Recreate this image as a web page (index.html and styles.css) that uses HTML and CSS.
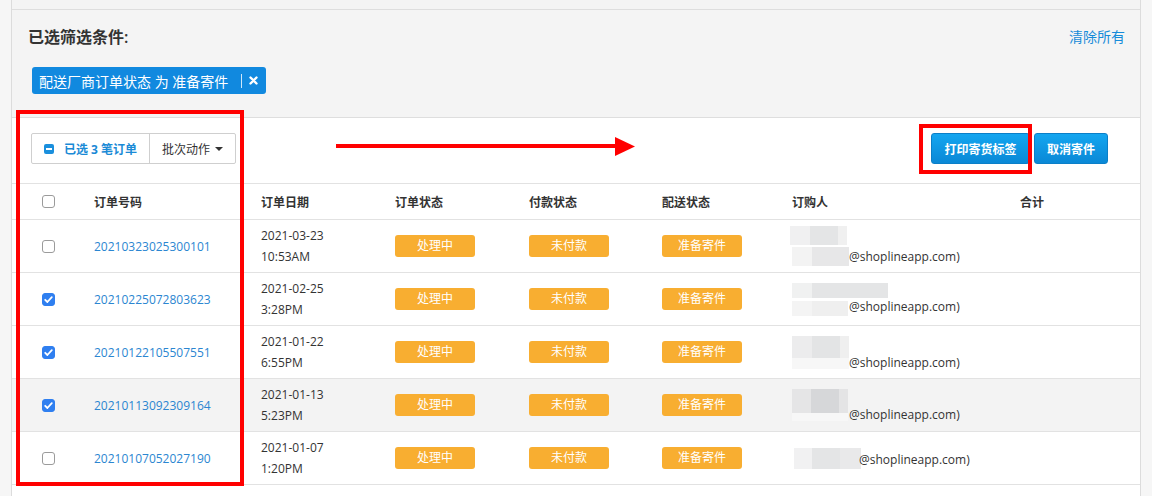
FILE: index.html
```html
<!DOCTYPE html>
<html lang="zh-CN">
<head>
  <meta charset="UTF-8">
  <title>订单 - 已选筛选条件</title>
  <link rel="stylesheet" href="styles.css">
</head>
<body>
  <div class="panel">
    <div class="top-strip"></div>

    <div class="filters">
      <div class="filters-head">
        <h2>已选筛选条件:</h2>
        <a class="clear-all">清除所有</a>
      </div>
      <div class="tag">
        <span>配送厂商订单状态 为 准备寄件</span>
        <span class="tag-sep"></span>
        <svg class="tag-x" width="9" height="9" viewBox="0 0 9 9"><path d="M1.5 1.5 L7.5 7.5 M7.5 1.5 L1.5 7.5" stroke="#fff" stroke-width="2.4" stroke-linecap="round"/></svg>
      </div>
    </div>

    <div class="orders">
      <div class="toolbar">
        <div class="btn-group">
          <span class="selected"><span class="minus-box"></span>已选 3 笔订单</span>
          <span class="bulk">批次动作 <span class="caret"></span></span>
        </div>
        <div class="actions">
          <button class="btn-blue btn-print">打印寄货标签</button>
          <button class="btn-blue btn-cancel">取消寄件</button>
        </div>
      </div>

      <div class="row head">
        <div class="cell check"><span class="box"></span></div>
        <div class="cell">订单号码</div>
        <div class="cell">订单日期</div>
        <div class="cell">订单状态</div>
        <div class="cell">付款状态</div>
        <div class="cell">配送状态</div>
        <div class="cell">订购人</div>
        <div class="cell">合计</div>
      </div>

      <div class="row">
        <div class="cell check"><span class="box"></span></div>
        <div class="cell"><a class="order-no">20210323025300101</a></div>
        <div class="cell date">2021-03-23<br>10:53AM</div>
        <div class="cell"><span class="badge">处理中</span></div>
        <div class="cell"><span class="badge">未付款</span></div>
        <div class="cell"><span class="badge">准备寄件</span></div>
        <div class="cell buyer">
          <div class="stack"><span class="blur r1a"></span><span class="blur r1b"></span></div>
          <span class="mail">@shoplineapp.com)</span>
        </div>
        <div class="cell"></div>
      </div>

      <div class="row">
        <div class="cell check"><span class="box on"><svg width="13" height="13" viewBox="0 0 13 13"><path d="M3.2 6.8 L5.4 9 L9.8 4.2" fill="none" stroke="#fff" stroke-width="1.8" stroke-linecap="round" stroke-linejoin="round"/></svg></span></div>
        <div class="cell"><a class="order-no">20210225072803623</a></div>
        <div class="cell date">2021-02-25<br>3:28PM</div>
        <div class="cell"><span class="badge">处理中</span></div>
        <div class="cell"><span class="badge">未付款</span></div>
        <div class="cell"><span class="badge">准备寄件</span></div>
        <div class="cell buyer">
          <div class="stack gap3"><span class="blur r2a"></span><span class="blur r2b"></span></div>
          <span class="mail">@shoplineapp.com)</span>
        </div>
        <div class="cell"></div>
      </div>

      <div class="row">
        <div class="cell check"><span class="box on"><svg width="13" height="13" viewBox="0 0 13 13"><path d="M3.2 6.8 L5.4 9 L9.8 4.2" fill="none" stroke="#fff" stroke-width="1.8" stroke-linecap="round" stroke-linejoin="round"/></svg></span></div>
        <div class="cell"><a class="order-no">20210122105507551</a></div>
        <div class="cell date">2021-01-22<br>6:55PM</div>
        <div class="cell"><span class="badge">处理中</span></div>
        <div class="cell"><span class="badge">未付款</span></div>
        <div class="cell"><span class="badge">准备寄件</span></div>
        <div class="cell buyer">
          <div class="stack"><span class="blur r3a"></span><span class="blur r3b"></span></div>
          <span class="mail low">@shoplineapp.com)</span>
        </div>
        <div class="cell"></div>
      </div>

      <div class="row hover">
        <div class="cell check"><span class="box on"><svg width="13" height="13" viewBox="0 0 13 13"><path d="M3.2 6.8 L5.4 9 L9.8 4.2" fill="none" stroke="#fff" stroke-width="1.8" stroke-linecap="round" stroke-linejoin="round"/></svg></span></div>
        <div class="cell"><a class="order-no">20210113092309164</a></div>
        <div class="cell date">2021-01-13<br>5:23PM</div>
        <div class="cell"><span class="badge">处理中</span></div>
        <div class="cell"><span class="badge">未付款</span></div>
        <div class="cell"><span class="badge">准备寄件</span></div>
        <div class="cell buyer">
          <div class="stack"><span class="blur r4a"></span><span class="blur r4b"></span></div>
          <span class="mail low">@shoplineapp.com)</span>
        </div>
        <div class="cell"></div>
      </div>

      <div class="row">
        <div class="cell check"><span class="box"></span></div>
        <div class="cell"><a class="order-no">20210107052027190</a></div>
        <div class="cell date">2021-01-07<br>1:20PM</div>
        <div class="cell"><span class="badge">处理中</span></div>
        <div class="cell"><span class="badge">未付款</span></div>
        <div class="cell"><span class="badge">准备寄件</span></div>
        <div class="cell buyer">
          <div class="stack wide"><span class="blur r5a"></span></div>
          <span class="mail">@shoplineapp.com)</span>
        </div>
        <div class="cell"></div>
      </div>
    </div>

    <!-- annotations drawn over the screenshot -->
    <div class="mark mark-list"></div>
    <div class="mark mark-print"></div>
    <svg class="arrow" width="310" height="36" viewBox="0 0 310 36">
      <line x1="6" y1="16" x2="288" y2="16" stroke="#f00" stroke-width="4"/>
      <polygon points="285,7 305,16.5 285,26" fill="#f00"/>
    </svg>
  </div>
</body>
</html>
```

FILE: styles.css
```css
* {
  box-sizing: border-box;
}

body {
  margin: 0;
  background: #f6f6f6;
  font-family: "Open Sans", "Noto Sans CJK SC", sans-serif;
  font-size: 12px;
  color: #333;
}

.panel {
  position: relative;
  margin-left: 11px;
  width: 1130px;
  min-height: 496px;
  background: #fff;
  border-left: 1px solid #dcdcdc;
  border-right: 1px solid #dcdcdc;
}

.top-strip {
  height: 10px;
  background: #f4f4f4;
  border-bottom: 1px solid #dedede;
}

/* filter summary */
.filters {
  height: 108px;
  padding: 15px 15px 0 16px;
  background: #f4f4f4;
  border-bottom: 1px solid #dedede;
}

.filters-head {
  display: flex;
  justify-content: space-between;
  align-items: center;
  height: 22px;
}

.filters-head h2 {
  margin: 0;
  font-size: 16px;
  font-weight: 600;
  color: #333;
}

.clear-all {
  font-size: 14px;
  color: #168bd9;
  cursor: pointer;
}

.tag {
  display: inline-flex;
  align-items: center;
  height: 27px;
  margin: 20px 0 0 4px;
  padding: 0 8px 0 7px;
  background: #1189df;
  border-radius: 3px;
  color: #fff;
  font-size: 14px;
}

.tag-sep {
  width: 1px;
  height: 14px;
  margin: 0 7px 0 13px;
  background: rgba(255, 255, 255, 0.8);
}

/* toolbar */
.toolbar {
  display: flex;
  justify-content: space-between;
  align-items: flex-start;
  height: 66px;
  padding: 15px 32px 0 19px;
  border-bottom: 1px solid #e2e2e2;
}

.btn-group {
  display: flex;
  height: 31px;
  border: 1px solid #cfcfcf;
  border-radius: 2px;
}

.btn-group > span {
  display: flex;
  align-items: center;
  padding: 0 12px;
}

.selected {
  color: #1a8ad6;
  font-weight: 700;
  border-right: 1px solid #cfcfcf;
}

.minus-box {
  position: relative;
  width: 10px;
  height: 10px;
  margin-right: 10px;
  background: #1a8fdd;
  border-radius: 2px;
}

.minus-box::after {
  content: "";
  position: absolute;
  left: 2px;
  top: 4px;
  width: 6px;
  height: 2px;
  background: #fff;
}

.bulk {
  color: #333;
}

.caret {
  width: 0;
  height: 0;
  margin-left: 5px;
  border-top: 4px solid #333;
  border-left: 4px solid transparent;
  border-right: 4px solid transparent;
}

.actions {
  display: flex;
  gap: 4px;
}

.btn-blue {
  height: 31px;
  padding: 0;
  font-family: inherit;
  font-size: 12px;
  font-weight: 600;
  color: #fff;
  background: linear-gradient(#14a6f0, #0a88d6);
  border: 1px solid #0b7fc8;
  border-radius: 3px;
  cursor: pointer;
}

.btn-print {
  width: 99px;
}

.btn-cancel {
  width: 74px;
}

/* order rows */
.row {
  display: grid;
  grid-template-columns: 74px 167px 134px 134px 133px 130px 228px 1fr;
  align-items: center;
  height: 53px;
  border-bottom: 1px solid #e2e2e2;
}

.row.head {
  height: 36px;
  font-weight: 600;
}

.row.hover {
  background: #f3f3f3;
}

.cell {
  padding-left: 8px;
}

.cell.check {
  display: flex;
  padding-left: 30px;
}

.box {
  display: block;
  width: 13px;
  height: 13px;
  background: #fff;
  border: 1px solid #9b9b9b;
  border-radius: 3px;
}

.box.on {
  background: #2f7ff0;
  border-color: #2f7ff0;
}

.box svg {
  display: block;
  margin: -1px;
}

.order-no {
  color: #2b86d1;
}

.date {
  line-height: 21px;
}

.badge {
  display: block;
  width: 80px;
  height: 22px;
  line-height: 22px;
  text-align: center;
  color: #fff;
  background: #f8ae31;
  border-radius: 3px;
}

.buyer {
  display: flex;
  align-items: flex-end;
}

.stack {
  display: flex;
  flex-direction: column;
  gap: 2px;
  width: 57px;
}

.stack.gap3 {
  gap: 3px;
}

.stack.wide {
  width: 67px;
}

.mail {
  line-height: 16px;
  margin-bottom: 1px;
}

.mail.low {
  margin-bottom: -2px;
}

.blur {
  display: block;
  flex: none;
}

.r1a { width: 57px; height: 19px; margin-left: -2px; background: linear-gradient(90deg, #f0f0f1 20px, #e4e5e6 20px 48px, #f0f0f0 48px); }
.r1b { width: 57px; height: 19px; background: linear-gradient(90deg, #f3f3f3 20px, #e7e7e8 20px); }
.r2a { width: 96px; height: 15px; background: linear-gradient(90deg, #f0f1f1 20px, #e4e5e6 20px); }
.r2b { width: 56px; height: 15px; background: linear-gradient(90deg, #f4f4f4 20px, #efefef 20px); }
.r3a { width: 57px; height: 22px; background: linear-gradient(90deg, #ececed 20px, #e3e4e5 20px 48px, #efefef 48px); }
.r3b { width: 57px; height: 11px; margin-top: -2px; background: #f7f7f7; }
.r4a { width: 56px; height: 24px; background: linear-gradient(90deg, #e5e5e6 19px, #d6d7d9 19px 47px, #e4e4e5 47px); }
.r4b { width: 56px; height: 8px; margin-top: -2px; background: #f7f7f7; }
.r5a { width: 67px; height: 21px; margin-left: 2px; background: linear-gradient(90deg, #f1f1f2 18px, #e4e5e6 18px 46px, #e9e9ea 46px); }

/* red annotations */
.mark {
  position: absolute;
  border: 4px solid #f00;
}

.mark-list {
  left: 4px;
  top: 110px;
  width: 228px;
  height: 376px;
}

.mark-print {
  left: 907px;
  top: 124px;
  width: 113px;
  height: 50px;
}

.arrow {
  position: absolute;
  left: 318px;
  top: 130px;
}
```
